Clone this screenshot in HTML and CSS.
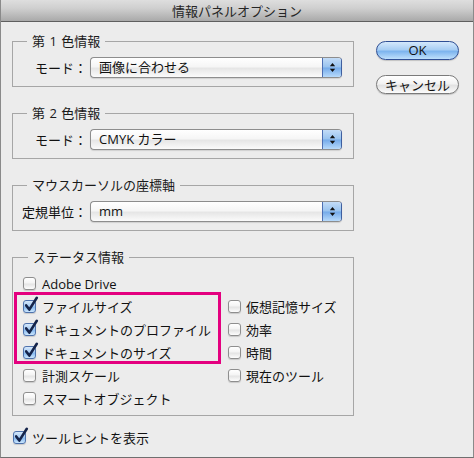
FILE: index.html
```html
<!DOCTYPE html>
<html lang="ja">
<head>
<meta charset="utf-8">
<title>情報パネルオプション</title>
<link rel="stylesheet" href="styles.css">
</head>
<body>
<div class="window">
  <div class="titlebar">情報パネルオプション</div>
  <div class="content">
    <div class="main">
      <fieldset class="group">
        <legend>第 1 色情報</legend>
        <div class="field">
          <span class="label">モード：</span>
          <div class="popup">
            <span class="popup-text">画像に合わせる</span>
            <span class="popup-arrows"><svg width="7" height="11" viewBox="0 0 7 11"><path d="M0.8 4.2 L3.5 1 L6.2 4.2 Z M0.8 6.8 L3.5 10 L6.2 6.8 Z" fill="#111"/></svg></span>
          </div>
        </div>
      </fieldset>

      <fieldset class="group">
        <legend>第 2 色情報</legend>
        <div class="field">
          <span class="label">モード：</span>
          <div class="popup">
            <span class="popup-text">CMYK カラー</span>
            <span class="popup-arrows"><svg width="7" height="11" viewBox="0 0 7 11"><path d="M0.8 4.2 L3.5 1 L6.2 4.2 Z M0.8 6.8 L3.5 10 L6.2 6.8 Z" fill="#111"/></svg></span>
          </div>
        </div>
      </fieldset>

      <fieldset class="group">
        <legend>マウスカーソルの座標軸</legend>
        <div class="field">
          <span class="label">定規単位：</span>
          <div class="popup">
            <span class="popup-text">mm</span>
            <span class="popup-arrows"><svg width="7" height="11" viewBox="0 0 7 11"><path d="M0.8 4.2 L3.5 1 L6.2 4.2 Z M0.8 6.8 L3.5 10 L6.2 6.8 Z" fill="#111"/></svg></span>
          </div>
        </div>
      </fieldset>

      <fieldset class="group status">
        <legend>ステータス情報</legend>
        <div class="status-cols">
          <div class="col-left">
            <div class="check"><span class="box"></span><span>Adobe Drive</span></div>
            <div class="highlight">
              <div class="check"><span class="box on"><svg viewBox="0 0 14 16"><path d="M2.2 8.4 L5.3 12.6 L12.8 0.8" fill="none" stroke="#15244a" stroke-width="2.6" stroke-linecap="round" stroke-linejoin="round"/></svg></span><span>ファイルサイズ</span></div>
              <div class="check"><span class="box on"><svg viewBox="0 0 14 16"><path d="M2.2 8.4 L5.3 12.6 L12.8 0.8" fill="none" stroke="#15244a" stroke-width="2.6" stroke-linecap="round" stroke-linejoin="round"/></svg></span><span>ドキュメントのプロファイル</span></div>
              <div class="check"><span class="box on"><svg viewBox="0 0 14 16"><path d="M2.2 8.4 L5.3 12.6 L12.8 0.8" fill="none" stroke="#15244a" stroke-width="2.6" stroke-linecap="round" stroke-linejoin="round"/></svg></span><span>ドキュメントのサイズ</span></div>
            </div>
            <div class="check"><span class="box"></span><span>計測スケール</span></div>
            <div class="check"><span class="box"></span><span>スマートオブジェクト</span></div>
          </div>
          <div class="col-right">
            <div class="check"><span class="box"></span><span>仮想記憶サイズ</span></div>
            <div class="check"><span class="box"></span><span>効率</span></div>
            <div class="check"><span class="box"></span><span>時間</span></div>
            <div class="check"><span class="box"></span><span>現在のツール</span></div>
          </div>
        </div>
      </fieldset>

      <div class="check tooltip"><span class="box on"><svg viewBox="0 0 14 16"><path d="M2.2 8.4 L5.3 12.6 L12.8 0.8" fill="none" stroke="#15244a" stroke-width="2.6" stroke-linecap="round" stroke-linejoin="round"/></svg></span><span>ツールヒントを表示</span></div>
    </div>

    <div class="buttons">
      <div class="btn btn-ok">OK</div>
      <div class="btn btn-cancel">キャンセル</div>
    </div>
  </div>
</div>
</body>
</html>
```

FILE: styles.css
```css
html, body {
  margin: 0;
  padding: 0;
  background: #ececec;
}

body {
  font-family: "Open Sans", "Noto Sans CJK JP", sans-serif;
  font-size: 13px;
  color: #111;
}

.window {
  width: 474px;
  height: 458px;
  box-sizing: border-box;
  background: #ececec;
  border: 1px solid #8a8a8a;
  border-top: none;
  border-bottom-color: #6f6f6f;
}

.titlebar {
  height: 22px;
  box-sizing: border-box;
  background: linear-gradient(#dedede, #cfcfcf 40%, #a9a9a9);
  border-bottom: 1px solid #5f5f5f;
  text-align: center;
  line-height: 21px;
  font-size: 13px;
  color: #262626;
  font-family: "Noto Sans CJK JP", sans-serif;
}

.content {
  display: flex;
  padding: 11px 0 0 11px;
}

.main {
  width: 342px;
  display: flex;
  flex-direction: column;
}

.group {
  margin: 0 0 18px 0;
  padding: 8px 11px 8px 9px;
  border: 1px solid #a6a6a6;
  min-width: 0;
}

.group legend {
  font-size: 13px;
  line-height: 16px;
  padding: 0 5px;
  margin-left: 5px;
  color: #1a1a1a;
  word-spacing: 1px;
}

.field {
  display: flex;
  align-items: center;
  gap: 3px;
}

.label {
  width: 65px;
  text-align: right;
  white-space: nowrap;
  font-family: "Noto Sans CJK JP", sans-serif;
  line-height: 21px;
}

.popup {
  flex: 1;
  height: 21px;
  box-sizing: border-box;
  border: 1px solid #8d8d8d;
  border-right-color: #3f5f9f;
  border-radius: 4px;
  background: linear-gradient(#ffffff, #f6f6f6 45%, #e6e6e6 55%, #fbfbfb);
  display: flex;
  align-items: stretch;
  overflow: hidden;
  box-shadow: 0 1px 1px rgba(0, 0, 0, 0.12);
}

.popup-text {
  flex: 1;
  padding-left: 8px;
  line-height: 19px;
  white-space: nowrap;
}

.popup-arrows {
  width: 18px;
  background: linear-gradient(#c3dcf7, #98c3ef 48%, #74aae9 52%, #b7dafb);
  border-left: 1px solid #4d6fb3;
  display: flex;
  align-items: center;
  justify-content: center;
}

.status {
  padding: 7px 11px 5px 10px;
  margin-bottom: 10px;
}

.status-cols {
  display: flex;
}

.col-left {
  width: 205px;
  display: flex;
  flex-direction: column;
}

.col-right {
  padding-top: 23px;
  display: flex;
  flex-direction: column;
}

.check {
  display: flex;
  align-items: center;
  gap: 6px;
  height: 23px;
  white-space: nowrap;
  line-height: 16px;
}

.col-right .check {
  gap: 5px;
}

.box {
  position: relative;
  flex: none;
  width: 13px;
  height: 13px;
  box-sizing: border-box;
  border: 1px solid #8e8e8e;
  border-radius: 3px;
  background: linear-gradient(#ffffff, #f4f4f4 45%, #e4e4e4 55%, #fdfdfd);
  box-shadow: 0 1px 1px rgba(0, 0, 0, 0.15);
}

.box.on {
  border-color: #4f73ad;
  background: linear-gradient(#d6e8fb, #a9cdf3 45%, #86b9ef 55%, #cbe6fd);
}

.box svg {
  position: absolute;
  left: 0;
  top: -4px;
  width: 14px;
  height: 16px;
  overflow: visible;
}

.highlight {
  position: relative;
}

.highlight::before {
  content: "";
  position: absolute;
  left: -9px;
  top: -3px;
  bottom: 0;
  width: 207px;
  box-sizing: border-box;
  border: 3px solid #e4007f;
  pointer-events: none;
}

.tooltip {
  margin-left: 1px;
}

.buttons {
  margin-left: 22px;
  padding-top: 8px;
  width: 83px;
  display: flex;
  flex-direction: column;
  gap: 15px;
}

.btn {
  height: 19px;
  box-sizing: border-box;
  border-radius: 10px;
  text-align: center;
  line-height: 17px;
  font-size: 13px;
  box-shadow: 0 1px 1px rgba(0, 0, 0, 0.18);
}

.btn-ok {
  border: 1px solid #2f4f95;
  background: linear-gradient(#d4e8fc, #a8cef4 45%, #7db4ee 55%, #bfe0fc);
  color: #111;
}

.btn-cancel {
  border: 1px solid #7a7a7a;
  background: linear-gradient(#ffffff, #f3f3f3 45%, #e2e2e2 55%, #fcfcfc);
  font-family: "Noto Sans CJK JP", sans-serif;
}
```
